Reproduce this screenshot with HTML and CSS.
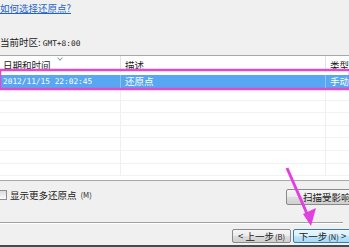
FILE: index.html
```html
<!DOCTYPE html>
<html lang="zh-CN">
<head>
    <meta charset="UTF-8">
    <title>系统还原</title>
    <link rel="stylesheet" href="styles.css">
</head>
<body>

<div class="page">
    <a class="help" href="#">如何选择还原点?</a>
    <div class="tz">当前时区: <span class="mono">GMT+8:00</span></div>

    <div class="list">
        <div class="row head">
            <div class="c1">日期和时间<span class="sort"></span></div>
            <div class="c2">描述</div>
            <div class="c3">类型</div>
        </div>
        <div class="row sel">
            <div class="c1 mono">2012/11/15 22:02:45</div>
            <div class="c2">还原点</div>
            <div class="c3">手动</div>
        </div>
        <div class="row"><div class="c1"></div><div class="c2"></div><div class="c3"></div></div>
        <div class="row"><div class="c1"></div><div class="c2"></div><div class="c3"></div></div>
        <div class="row"><div class="c1"></div><div class="c2"></div><div class="c3"></div></div>
        <div class="row"><div class="c1"></div><div class="c2"></div><div class="c3"></div></div>
        <div class="row"><div class="c1"></div><div class="c2"></div><div class="c3"></div></div>
        <div class="row"><div class="c1"></div><div class="c2"></div><div class="c3"></div></div>
        <div class="row"><div class="c1"></div><div class="c2"></div><div class="c3"></div></div>
    </div>

    <div class="opts">
        <label class="check"><span class="box"></span>显示更多还原点<span class="key">(M)</span></label>
        <button class="btn scan">扫描受影响的程序(A)</button>
    </div>

    <div class="sep"></div>

    <div class="nav">
        <button class="btn">&lt; 上一步<span class="key">(B)</span></button>
        <button class="btn focus">下一步<span class="key">(N)</span> &gt;</button>
    </div>

    <!-- annotation drawn over the dialog -->
    <svg class="marks" width="349" height="247" viewBox="0 0 349 247">
        <rect x="0" y="70" width="350" height="19" fill="none" stroke="#e24ac6" stroke-width="2.5"/>
        <line x1="287" y1="168" x2="308" y2="216" stroke="#e23ee0" stroke-width="3"/>
        <polygon points="303,214 316,208 311,226" fill="#e23ee0"/>
    </svg>
</div>

</body>
</html>
```

FILE: styles.css
```css
* {
    box-sizing: border-box;
}
body {
    margin: 0;
    background: #f0f0f0;
    font-family: "Noto Sans CJK SC", "DejaVu Sans", sans-serif;
    font-size: 9.5px;
    color: #1a1a1a;
    overflow: hidden;
}
.page {
    position: relative;
    width: 349px;
    height: 247px;
    overflow: hidden;
    display: flex;
    flex-direction: column;
}
.help {
    display: block;
    margin: 2px 0 0 0;
    line-height: 12px;
    color: #1f64c8;
    text-decoration: underline;
}
.tz {
    margin: 22px 0 0 0;
    line-height: 12px;
}
.mono {
    font-family: "DejaVu Sans Mono", "Liberation Mono", monospace;
    font-size: 7.8px;
}
.list {
    margin-top: 5px;
    height: 126px;
    background: #fff;
    border-top: 1px solid #a8a8a8;
    border-bottom: 1px solid #a8a8a8;
    overflow: hidden;
}
.row {
    display: grid;
    grid-template-columns: 121px 205px 40px;
    height: 12.6px;
    line-height: 12px;
    border-bottom: 1px solid #f2f2f2;
}
.row > div {
    border-right: 1px solid #efefef;
    padding-left: 4px;
    white-space: nowrap;
    overflow: hidden;
}
.row.head {
    height: 19px;
    line-height: 18px;
    border-bottom: none;
}
.row.head > div {
    border-right: 1px solid #e3e3e3;
    height: 16px;
    line-height: 19px;
}
.head .c1 {
    position: relative;
    padding-left: 3px;
}
.sort {
    position: absolute;
    left: 58px;
    top: 0;
    width: 4px;
    height: 4px;
    border-right: 1px solid #9aa4b8;
    border-bottom: 1px solid #9aa4b8;
    transform: rotate(45deg);
}
.row.sel {
    height: 13px;
    background: #58a7f3;
    color: #fff;
    border-bottom: none;
}
.row.sel > div {
    border-right: 1px solid #8cc2f5;
}
.row.sel .mono {
    padding-left: 3px;
    line-height: 13px;
}
.opts {
    height: 41px;
    padding-top: 8px;
    display: flex;
    align-items: flex-start;
    justify-content: space-between;
}
.check {
    display: flex;
    align-items: center;
    gap: 3px;
    margin-left: -3px;
    line-height: 12px;
}
.box {
    width: 10px;
    height: 10px;
    border: 1px solid #8e8f8f;
    background: linear-gradient(#dcdcdc, #fbfbfb);
}
.key {
    font-size: 7.5px;
    margin-left: 1px;
}
.btn {
    font-family: inherit;
    font-size: 9.5px;
    color: #1a1a1a;
    height: 16px;
    padding: 0 6px;
    line-height: 13px;
    border: 1px solid #8a8a8a;
    border-radius: 2px;
    background: linear-gradient(#f6f6f6 0%, #ebebeb 50%, #dddddd 51%, #cfcfcf 100%);
    white-space: nowrap;
}
.scan {
    width: 100px;
    margin-right: -37px;
    padding-left: 16px;
    text-align: left;
}
.sep {
    height: 2px;
    margin-right: 6px;
    border-top: 1px solid #a0a0a0;
    border-bottom: 1px solid #fff;
}
.nav {
    flex: 1;
    display: flex;
    justify-content: flex-end;
    align-items: flex-end;
    gap: 2px;
    padding-bottom: 2px;
    margin-right: -3px;
    border-bottom: 2px solid #4a4a4a;
}
.nav .btn {
    width: 59px;
    height: 14px;
    line-height: 12px;
    padding: 0 2px;
}
.btn.focus {
    border-color: #3d7bad;
    background: linear-gradient(#eaf6fd 0%, #d9f0fc 50%, #bee6fd 51%, #a7d9f5 100%);
}
.marks {
    position: absolute;
    left: 0;
    top: 0;
}
```
